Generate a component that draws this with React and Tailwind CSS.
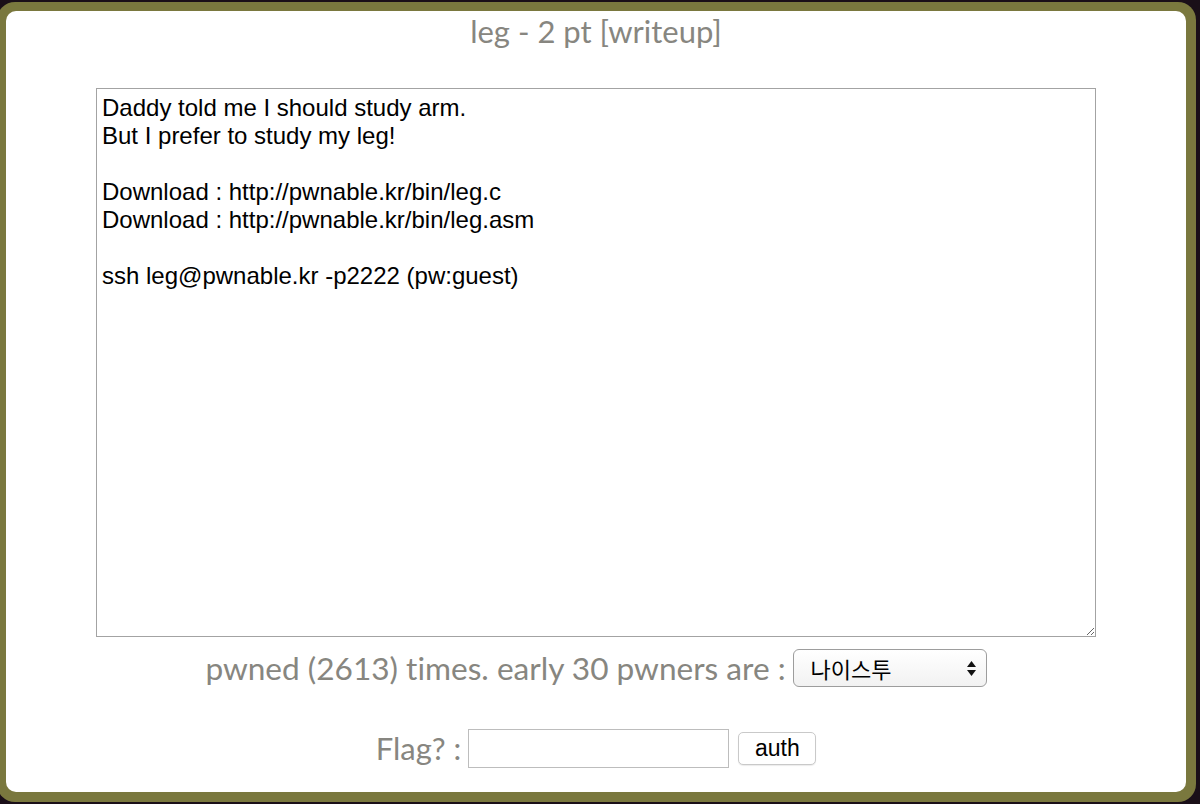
import { useState } from 'react'

const body = `Daddy told me I should study arm.
But I prefer to study my leg!

Download : http://pwnable.kr/bin/leg.c
Download : http://pwnable.kr/bin/leg.asm

ssh leg@pwnable.kr -p2222 (pw:guest)`

export default function App() {
  const [flag, setFlag] = useState('')

  return (
    <div className="h-[804px] w-[1200px] overflow-hidden bg-[#1a0f18] pt-[2px]">
      <div className="ml-[-3px] h-[800px] w-[1199px] rounded-[18px] bg-[#7a783e] pb-[10px] pl-[9px] pr-[10px] pt-[9px]">
        <div className="flex h-full flex-col items-center rounded-[10px] bg-white font-['Lato',sans-serif] text-[#878680] [font-variant-ligatures:none]">
          <h1 className="mt-[1px] text-[31px] leading-[38px]">leg - 2 pt [writeup]</h1>

          <textarea
            readOnly
            defaultValue={body}
            className="mt-[38px] h-[549px] w-[1000px] resize border border-[#a3a3a3] px-[5px] py-[5px] font-['Liberation_Sans',Arial,sans-serif] text-[24px] leading-[28px] text-black outline-none"
          />

          <div className="mt-[12px] flex items-center gap-[7px]">
            <span className="text-[31.6px] leading-[38px]">pwned (2613) times. early 30 pwners are :</span>
            <div className="relative">
              <select className="h-[38px] w-[194px] appearance-none rounded-[6px] border border-[#9d9d9d] bg-gradient-to-b from-white to-[#f2f2f2] pl-[17px] font-['Noto_Sans_CJK_KR',sans-serif] text-[22px] text-black outline-none">
                <option>나이스투</option>
              </select>
              <svg className="pointer-events-none absolute right-[10px] top-[11px]" width="11" height="17" viewBox="0 0 11 17">
                <path d="M5.5 1 L10 7 L1 7 Z" fill="#111" />
                <path d="M5.5 16 L10 10 L1 10 Z" fill="#111" />
              </svg>
            </div>
          </div>

          <div className="mt-[42px] flex items-center gap-[7px]">
            <span className="text-[31px] leading-[39px]">Flag? :</span>
            <input
              value={flag}
              onChange={(e) => setFlag(e.target.value)}
              className="h-[39px] w-[261px] border border-[#bdbdbd] px-2 font-['Liberation_Sans',Arial,sans-serif] text-[20px] text-black outline-none"
            />
            <button className="ml-[2px] h-[33px] w-[78px] rounded-[5px] border border-[#c9c9c9] bg-white font-['Liberation_Sans',Arial,sans-serif] text-[23px] leading-none text-black shadow-[0_1px_1px_rgba(0,0,0,0.08)]">
              auth
            </button>
          </div>
        </div>
      </div>
    </div>
  )
}
